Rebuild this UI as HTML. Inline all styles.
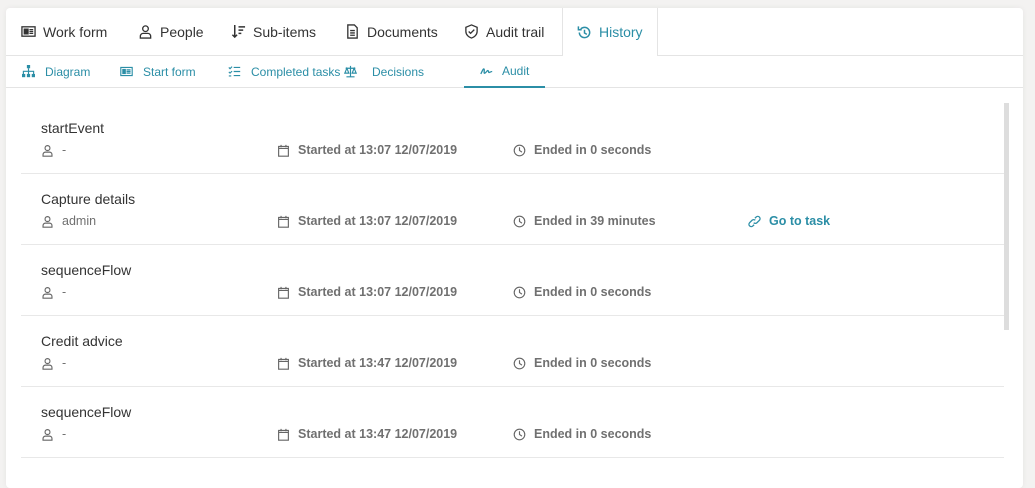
<!DOCTYPE html>
<html><head><style>
*{box-sizing:border-box;margin:0;padding:0}
body{width:1035px;height:474px;background:#f3f2f1;font-family:"Liberation Sans",sans-serif;overflow:hidden;position:relative}
.card{position:absolute;left:6px;top:8px;width:1017px;height:480px;background:#fff;border-radius:4px;box-shadow:0 0 6px rgba(0,0,0,.06)}
.tabs{position:absolute;left:0;top:0;width:100%;height:48px;border-bottom:1px solid #e4e4e4}
.tab{position:absolute;top:0;height:47px;line-height:46px;font-size:14px;color:#333;display:flex;align-items:center;gap:7px}
.tab svg{width:15px;height:15px}
.hist{border-left:1px solid #e4e4e4;border-right:1px solid #e4e4e4;height:48px;background:#fff;color:#2b8ea6;padding:0 14px}
.sub{position:absolute;top:48px;width:100%;height:32px;border-bottom:1px solid #e4e4e4}
.st{position:absolute;top:0;height:31px;display:flex;align-items:center;gap:10px;font-size:12px;color:#2b8ea6}
.st svg{width:13px;height:13px}
.act{border-bottom:2px solid #2b8ea6;height:32px}
.row{position:absolute;left:21px;width:983px;height:71px;border-bottom:1px solid #e8e8e8}
.t{position:absolute;left:20px;top:17px;font-size:14px;color:#333}
.m{position:absolute;top:40px;font-size:12.5px;color:#707070;font-weight:bold;display:flex;align-items:center;gap:8px}
.m svg{width:13px;height:13px}
.m.u{font-weight:normal}
.link{color:#2b8ea6}
.sb{position:absolute;left:998px;top:95px;width:5px;height:227px;background:#ddd}
</style></head><body>
<div class="card">
<div class="tabs">
<div class="tab" style="left:15px"><svg viewBox="0 0 16 16" fill="none" stroke="#333" stroke-width="1.4"><rect x="1" y="3" width="14" height="10"/><rect x="3.5" y="5.5" width="4" height="5" fill="#333"/><path d="M9 6h4M9 8h4M9 10h4"/></svg>Work form</div>
<div class="tab" style="left:132px"><svg viewBox="0 0 16 16" fill="none" stroke="#333" stroke-width="1.4"><circle cx="8" cy="5" r="3"/><path d="M2.5 15v-2a3 3 0 0 1 3-3h5a3 3 0 0 1 3 3v2z"/></svg>People</div>
<div class="tab" style="left:225px"><svg viewBox="0 0 16 16" fill="none" stroke="#333" stroke-width="1.6"><path d="M4 1v13M1.5 11.5 4 14l2.5-2.5M8 3h7M8 6.5h5M8 10h3"/></svg>Sub-items</div>
<div class="tab" style="left:339px"><svg viewBox="0 0 16 16" fill="none" stroke="#333" stroke-width="1.4"><path d="M3 1h7l3 3v11H3z"/><path d="M5.5 7h5M5.5 9.5h5M5.5 12h5"/></svg>Documents</div>
<div class="tab" style="left:458px"><svg viewBox="0 0 16 16" fill="none" stroke="#333" stroke-width="1.4"><path d="M8 1 2 3.5V8c0 3.5 3 6 6 7 3-1 6-3.5 6-7V3.5z"/><path d="m5 8 2 2 4-4"/></svg>Audit trail</div>
<div class="tab hist" style="left:556px"><svg viewBox="0 0 16 16" fill="none" stroke="#2b8ea6" stroke-width="1.6"><path d="M2.5 8A5.5 5.5 0 1 0 4 4.2M1.5 1.5v3.5H5M8 5v3.5l2.5 1.5"/></svg>History</div>
</div>
<div class="sub">
<div class="st" style="left:16px"><svg viewBox="0 0 16 16" fill="#2b8ea6"><rect x="6" y="0" width="4" height="4"/><rect x="0" y="11" width="4" height="4"/><rect x="6" y="11" width="4" height="4"/><rect x="12" y="11" width="4" height="4"/><path d="M7.3 4h1.4v3H15v4h-1.4V8.4H8.7V11H7.3V8.4H2.4V11H1V7h6.3z"/></svg>Diagram</div>
<div class="st" style="left:114px"><svg viewBox="0 0 16 16" fill="none" stroke="#2b8ea6" stroke-width="1.4"><rect x="1" y="3" width="14" height="10"/><rect x="3.5" y="5.5" width="3" height="5" fill="#2b8ea6"/><path d="M8 6h5M8 8h5M8 10h5"/></svg>Start form</div>
<div class="st" style="left:222px"><svg viewBox="0 0 16 16" fill="none" stroke="#2b8ea6" stroke-width="1.4"><path d="M1 3l1.5 1.5L5 2M1 8.5l1.5 1.5L5 7.5M1 13.5h3M7 3h8M7 8h8M7 13h8"/></svg>Completed tasks</div>
<div class="st" style="left:338px;gap:15px"><svg viewBox="0 0 16 16" fill="none" stroke="#2b8ea6" stroke-width="1.4"><path d="M8 1v13M3 14.5h10M2 4h12M3.5 4 1 10h5zM12.5 4 10 10h5z"/></svg>Decisions</div>
<div class="st act" style="left:458px;padding:0 16px;gap:9px"><svg viewBox="0 0 16 16" fill="none" stroke="#2b8ea6" stroke-width="1.6"><path d="M1 11c2-4 3-7 4-6s-1 6 1 5 3-4 4-3 0 3 2 2 3-1 3-1"/></svg>Audit</div>
</div>
<div class="sb"></div>
</div>

<div class="row" style="top:103px"><div class="t">startEvent</div>
<div class="m u" style="left:20px"><svg viewBox="0 0 16 16" fill="none" stroke="#666" stroke-width="1.4"><circle cx="8" cy="5" r="3"/><path d="M2.5 15v-2a3 3 0 0 1 3-3h5a3 3 0 0 1 3 3v2z"/></svg>-</div>
<div class="m" style="left:256px"><svg viewBox="0 0 16 16" fill="none" stroke="#666" stroke-width="1.4"><rect x="2" y="3" width="12" height="12"/><path d="M5 1v3M11 1v3M2 5.5h12"/></svg>Started at 13:07 12/07/2019</div>
<div class="m" style="left:492px"><svg viewBox="0 0 16 16" fill="none" stroke="#666" stroke-width="1.4"><circle cx="8" cy="8" r="6.5"/><path d="M8 4v4l3 2"/></svg>Ended in 0 seconds</div></div>

<div class="row" style="top:174px"><div class="t">Capture details</div>
<div class="m u" style="left:20px"><svg viewBox="0 0 16 16" fill="none" stroke="#666" stroke-width="1.4"><circle cx="8" cy="5" r="3"/><path d="M2.5 15v-2a3 3 0 0 1 3-3h5a3 3 0 0 1 3 3v2z"/></svg>admin</div>
<div class="m" style="left:256px"><svg viewBox="0 0 16 16" fill="none" stroke="#666" stroke-width="1.4"><rect x="2" y="3" width="12" height="12"/><path d="M5 1v3M11 1v3M2 5.5h12"/></svg>Started at 13:07 12/07/2019</div>
<div class="m" style="left:492px"><svg viewBox="0 0 16 16" fill="none" stroke="#666" stroke-width="1.4"><circle cx="8" cy="8" r="6.5"/><path d="M8 4v4l3 2"/></svg>Ended in 39 minutes</div>
<div class="m link" style="left:727px"><svg viewBox="0 0 16 16" fill="none" stroke="#2b8ea6" stroke-width="1.6"><path d="M7 9.5a3 3 0 0 0 4 0l3-3a2.8 2.8 0 0 0-4-4L8.5 4M9 6.5a3 3 0 0 0-4 0l-3 3a2.8 2.8 0 0 0 4 4L7.5 12"/></svg>Go to task</div></div>

<div class="row" style="top:245px"><div class="t">sequenceFlow</div>
<div class="m u" style="left:20px"><svg viewBox="0 0 16 16" fill="none" stroke="#666" stroke-width="1.4"><circle cx="8" cy="5" r="3"/><path d="M2.5 15v-2a3 3 0 0 1 3-3h5a3 3 0 0 1 3 3v2z"/></svg>-</div>
<div class="m" style="left:256px"><svg viewBox="0 0 16 16" fill="none" stroke="#666" stroke-width="1.4"><rect x="2" y="3" width="12" height="12"/><path d="M5 1v3M11 1v3M2 5.5h12"/></svg>Started at 13:07 12/07/2019</div>
<div class="m" style="left:492px"><svg viewBox="0 0 16 16" fill="none" stroke="#666" stroke-width="1.4"><circle cx="8" cy="8" r="6.5"/><path d="M8 4v4l3 2"/></svg>Ended in 0 seconds</div></div>

<div class="row" style="top:316px"><div class="t">Credit advice</div>
<div class="m u" style="left:20px"><svg viewBox="0 0 16 16" fill="none" stroke="#666" stroke-width="1.4"><circle cx="8" cy="5" r="3"/><path d="M2.5 15v-2a3 3 0 0 1 3-3h5a3 3 0 0 1 3 3v2z"/></svg>-</div>
<div class="m" style="left:256px"><svg viewBox="0 0 16 16" fill="none" stroke="#666" stroke-width="1.4"><rect x="2" y="3" width="12" height="12"/><path d="M5 1v3M11 1v3M2 5.5h12"/></svg>Started at 13:47 12/07/2019</div>
<div class="m" style="left:492px"><svg viewBox="0 0 16 16" fill="none" stroke="#666" stroke-width="1.4"><circle cx="8" cy="8" r="6.5"/><path d="M8 4v4l3 2"/></svg>Ended in 0 seconds</div></div>

<div class="row" style="top:387px"><div class="t">sequenceFlow</div>
<div class="m u" style="left:20px"><svg viewBox="0 0 16 16" fill="none" stroke="#666" stroke-width="1.4"><circle cx="8" cy="5" r="3"/><path d="M2.5 15v-2a3 3 0 0 1 3-3h5a3 3 0 0 1 3 3v2z"/></svg>-</div>
<div class="m" style="left:256px"><svg viewBox="0 0 16 16" fill="none" stroke="#666" stroke-width="1.4"><rect x="2" y="3" width="12" height="12"/><path d="M5 1v3M11 1v3M2 5.5h12"/></svg>Started at 13:47 12/07/2019</div>
<div class="m" style="left:492px"><svg viewBox="0 0 16 16" fill="none" stroke="#666" stroke-width="1.4"><circle cx="8" cy="8" r="6.5"/><path d="M8 4v4l3 2"/></svg>Ended in 0 seconds</div></div>
</body></html>
